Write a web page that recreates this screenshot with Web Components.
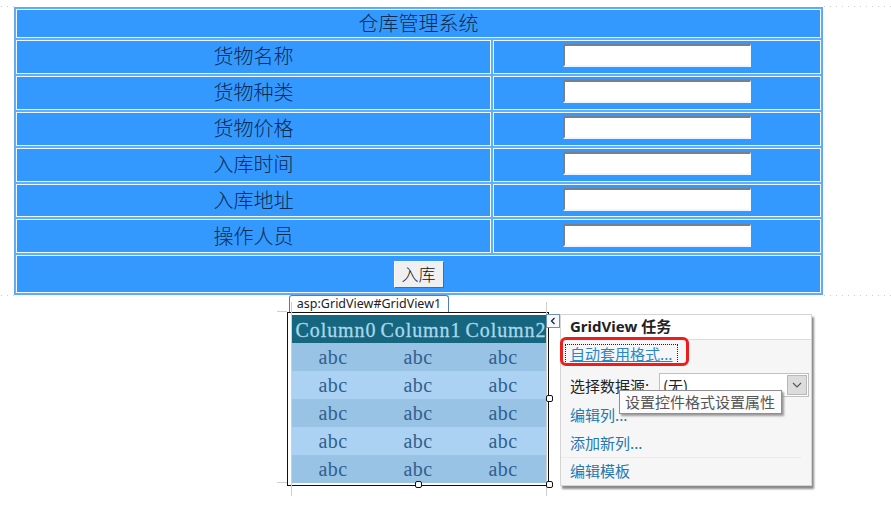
<!DOCTYPE html>
<html>
<head>
<meta charset="utf-8">
<title>仓库管理系统</title>
<style>
    html, body { margin: 0; padding: 0; background: #fff; }
    body { width: 891px; height: 531px; overflow: hidden; font-family: "Liberation Serif", "Noto Sans CJK SC", serif; }
</style>
</head>
<body>
<store-table title-text="仓库管理系统">
    <store-row label="货物名称"></store-row>
    <store-row label="货物种类"></store-row>
    <store-row label="货物价格"></store-row>
    <store-row label="入库时间"></store-row>
    <store-row label="入库地址"></store-row>
    <store-row label="操作人员"></store-row>
    <store-submit>入库</store-submit>
</store-table>
<design-surface>
    <grid-view></grid-view>
    <task-panel></task-panel>
</design-surface>

<script>
class StoreTable extends HTMLElement {
    constructor() {
        super();
        this.shadow = this.attachShadow({mode: 'open'});
        this.shadow.innerHTML = `
        <style>
            :host {
                display: block;
                position: relative;
                box-sizing: border-box;
                width: 809px;
                margin: 7px 0 0 14px;
                background: #3399ff;
                border: 1px dotted #cfe6fb;
                outline: 1px solid #62a8ee;
                outline-offset: -1px;
            }
            .rows {
                display: flex;
                flex-direction: column;
                gap: 2px;
                padding: 1px;
            }
            .title {
                box-sizing: border-box;
                height: 29px;
                padding-bottom: 2px;
                border: 1px solid #eef6ff;
                box-shadow: 0 0 0 1px rgba(255,255,255,.22);
                display: flex;
                align-items: center;
                justify-content: center;
                color: #0c2a52;
                font: 300 20px "Noto Sans CJK SC", sans-serif;
            }
            .dot {
                position: absolute;
                height: 1px;
                background: repeating-linear-gradient(90deg, #cdcdcd 0 1px, transparent 1px 6px);
            }
        </style>
        <div class="rows">
            <div class="title">${this.getAttribute('title-text')}</div>
            <slot></slot>
        </div>
        <i class="dot" style="left:-14px;top:-2px;width:14px"></i>
        <i class="dot" style="left:809px;top:-2px;width:68px"></i>
        <i class="dot" style="left:-14px;top:287px;width:14px"></i>
        <i class="dot" style="left:809px;top:287px;width:68px"></i>
        `;
    }
}

class StoreRow extends HTMLElement {
    constructor() {
        super();
        this.shadow = this.attachShadow({mode: 'open'});
        this.shadow.innerHTML = `
        <style>
            :host {
                display: grid;
                grid-template-columns: 475px 1fr;
                gap: 2px;
                height: 33.9px;
            }
            .cell {
                box-sizing: border-box;
                border: 1px solid #eef6ff;
                box-shadow: 0 0 0 1px rgba(255,255,255,.22);
                display: flex;
                align-items: center;
                justify-content: center;
                color: #0c2a52;
                font: 300 20px "Noto Sans CJK SC", sans-serif;
                padding-bottom: 2px;
            }
            input {
                box-sizing: border-box;
                width: 188px;
                height: 23px;
                margin: 0;
                padding: 0;
                background: #fff;
                border-style: solid;
                border-width: 2px 1px 2px 2px;
                border-color: #76818d #f4f9ff #eef6ff #76818d;
            }
        </style>
        <div class="cell">${this.getAttribute('label')}</div>
        <div class="cell"><input type="text"></div>
        `;
    }
}

class StoreSubmit extends HTMLElement {
    constructor() {
        super();
        this.shadow = this.attachShadow({mode: 'open'});
        this.shadow.innerHTML = `
        <style>
            :host {
                display: flex;
                box-sizing: border-box;
                height: 38px;
                border: 1px solid #eef6ff;
                box-shadow: 0 0 0 1px rgba(255,255,255,.22);
                align-items: center;
                justify-content: center;
            }
            button {
                box-sizing: border-box;
                width: 50px;
                height: 27px;
                padding: 0;
                background: #f0f0f0;
                border: 1px solid;
                border-color: #fff #666 #666 #fff;
                color: #111;
                font: 300 17px "Noto Sans CJK SC", sans-serif;
                line-height: 20px;
            }
        </style>
        <button><slot></slot></button>
        `;
    }
}

class DesignSurface extends HTMLElement {
    constructor() {
        super();
        this.shadow = this.attachShadow({mode: 'open'});
        this.shadow.innerHTML = `
        <style>
            :host {
                display: flex;
                align-items: flex-start;
                margin-left: 287px;
                position: relative;
            }
        </style>
        <slot></slot>
        `;
    }
}

class GridView extends HTMLElement {
    constructor() {
        super();
        this.shadow = this.attachShadow({mode: 'open'});
        let rows = '';
        for (let i = 0; i < 5; i++) {
            rows += `<div class="row ${i % 2 ? 'light' : ''}"><span>abc</span><span>abc</span><span>abc</span></div>`;
        }
        this.shadow.innerHTML = `
        <style>
            :host {
                display: block;
                position: relative;
                width: 262px;
                flex: none;
            }
            .tab {
                box-sizing: border-box;
                width: 160px;
                height: 17px;
                margin-left: 2px;
                border: 1px solid #4f7cb8;
                border-bottom: 0;
                border-radius: 3px 3px 0 0;
                background: #fff;
                color: #222;
                font: 12.5px/16px "Noto Sans", sans-serif;
                text-align: center;
            }
            .box {
                box-sizing: border-box;
                width: 262px;
                height: 174px;
                border: 1.5px solid #111;
                padding: 1.5px 0 0 2.5px;
            }
            .head, .row {
                display: grid;
                grid-template-columns: repeat(3, 85px);
                width: 256px;
                height: 28px;
                align-items: center;
                justify-items: center;
                box-sizing: border-box;
            }
            .head {
                padding: 3px 0 0 3px;
                background: #17667f;
                color: #a8d8ec;
                font: 20px "Liberation Serif", serif;
                letter-spacing: .9px;
                -webkit-text-stroke: .3px #a8d8ec;
            }
            .row {
                padding-top: 2px;
                background: #98c3e5;
                color: #30608e;
                font: 20px "Liberation Serif", serif;
                letter-spacing: .4px;
            }
            .row.light { background: #abd2f2; }
            .handle {
                position: absolute;
                box-sizing: border-box;
                width: 7px;
                height: 7px;
                background: #fff;
                border: 1px solid #111;
                border-radius: 2px;
            }
            .guide { position: absolute; background: #cfcfcf; }
        </style>
        <div class="tab">asp:GridView#GridView1</div>
        <div class="box">
            <div class="head"><span>Column0</span><span>Column1</span><span>Column2</span></div>
            ${rows}
        </div>
        <i class="guide" style="left:4px;top:7px;width:1px;height:194px"></i>
        <i class="guide" style="left:259px;top:7px;width:1px;height:194px"></i>
        <i class="guide" style="left:-10px;top:16px;width:10px;height:1px"></i>
        <i class="guide" style="left:-10px;top:187px;width:10px;height:1px"></i>
        <i class="handle" style="left:259px;top:100px"></i>
        <i class="handle" style="left:128px;top:186px"></i>
        <i class="handle" style="left:259px;top:186px"></i>
        `;
    }
}

class TaskPanel extends HTMLElement {
    constructor() {
        super();
        this.shadow = this.attachShadow({mode: 'open'});
        this.shadow.innerHTML = `
        <style>
            :host {
                display: block;
                position: relative;
                box-sizing: border-box;
                width: 252px;
                height: 172px;
                margin: 19px 0 0 12px;
                left: -1px;
                background: #f6f6f6;
                border: 1px solid #d4d4d4;
                box-shadow: 2px 3px 2px #8a8a8a;
                font: 15px "Noto Sans CJK SC", sans-serif;
                color: #222;
            }
            .chevron {
                position: absolute;
                left: -15px;
                top: -1px;
                box-sizing: border-box;
                width: 14px;
                height: 14px;
                background: #f4f8ff;
                border: 1px solid #6d8fc4;
            }
            .chevron svg { display: block; }
            h1 {
                box-sizing: border-box;
                height: 25px;
                margin: 0;
                padding-left: 9px;
                border-bottom: 1px solid #dcdcdc;
                background: #fff;
                font: bold 15px/23px "Noto Sans", "Noto Sans CJK SC", sans-serif;
                color: #222;
            }
            .item {
                height: 28px;
                padding-left: 9px;
                line-height: 28px;
                color: #2477b0;
                white-space: nowrap;
            }
            .auto { height: 30px; line-height: 28px; }
            .auto a {
                display: inline-block;
                height: 18px;
                line-height: 18px;
                margin-left: -4px;
                padding: 0 4px;
                outline: 1px dotted #222;
                color: #2a86c8;
                text-decoration: underline;
            }
            .source {
                display: flex;
                align-items: center;
                height: 26px;
                margin: 2px 0 3px;
                padding-left: 9px;
                color: #222;
            }
            .source label { width: 89px; white-space: nowrap; }
            .select {
                box-sizing: border-box;
                width: 150px;
                height: 24px;
                display: flex;
                justify-content: space-between;
                align-items: center;
                padding-left: 3px;
                background: #fff;
                border: 1px solid #c0c0c0;
            }
            .drop {
                width: 20px;
                height: 20px;
                margin-right: 1px;
                background: #dcdcdc;
                border: 1px solid #b8b8b8;
                box-sizing: border-box;
            }
            .drop svg { display: block; }
            .sep { border-top: 1px solid #ececec; margin-right: 10px; }
            .last { height: 26px; line-height: 26px; }
            .red {
                position: absolute;
                left: -1px;
                top: 22px;
                box-sizing: border-box;
                width: 129px;
                height: 29px;
                border: 3px solid #ee1c1c;
                border-radius: 6px;
                pointer-events: none;
            }
            .tip {
                position: absolute;
                left: 58px;
                top: 75px;
                box-sizing: border-box;
                width: 163px;
                height: 24px;
                padding-left: 5px;
                background: #fbfbfb;
                border: 1px solid #8f8f8f;
                box-shadow: 2px 2px 2px #9a9a9a;
                color: #555;
                line-height: 22px;
                white-space: nowrap;
            }
        </style>
        <div class="chevron"><svg width="12" height="12" viewBox="0 0 12 12"><path d="M7.5 3 L4.5 6 L7.5 9" fill="none" stroke="#223" stroke-width="1.3"/></svg></div>
        <h1>GridView 任务</h1>
        <div class="item auto"><a>自动套用格式...</a></div>
        <div class="source">
            <label>选择数据源:</label>
            <div class="select"><span>(无)</span><div class="drop"><svg width="18" height="18" viewBox="0 0 18 18"><path d="M5 7 L9 11 L13 7" fill="none" stroke="#555" stroke-width="1.1"/></svg></div></div>
        </div>
        <div class="item">编辑列...</div>
        <div class="item">添加新列...</div>
        <div class="sep"></div>
        <div class="item last">编辑模板</div>
        <div class="red"></div>
        <div class="tip">设置控件格式设置属性</div>
        `;
    }
}

customElements.define('store-table', StoreTable);
customElements.define('store-row', StoreRow);
customElements.define('store-submit', StoreSubmit);
customElements.define('design-surface', DesignSurface);
customElements.define('grid-view', GridView);
customElements.define('task-panel', TaskPanel);
</script>
</body>
</html>
